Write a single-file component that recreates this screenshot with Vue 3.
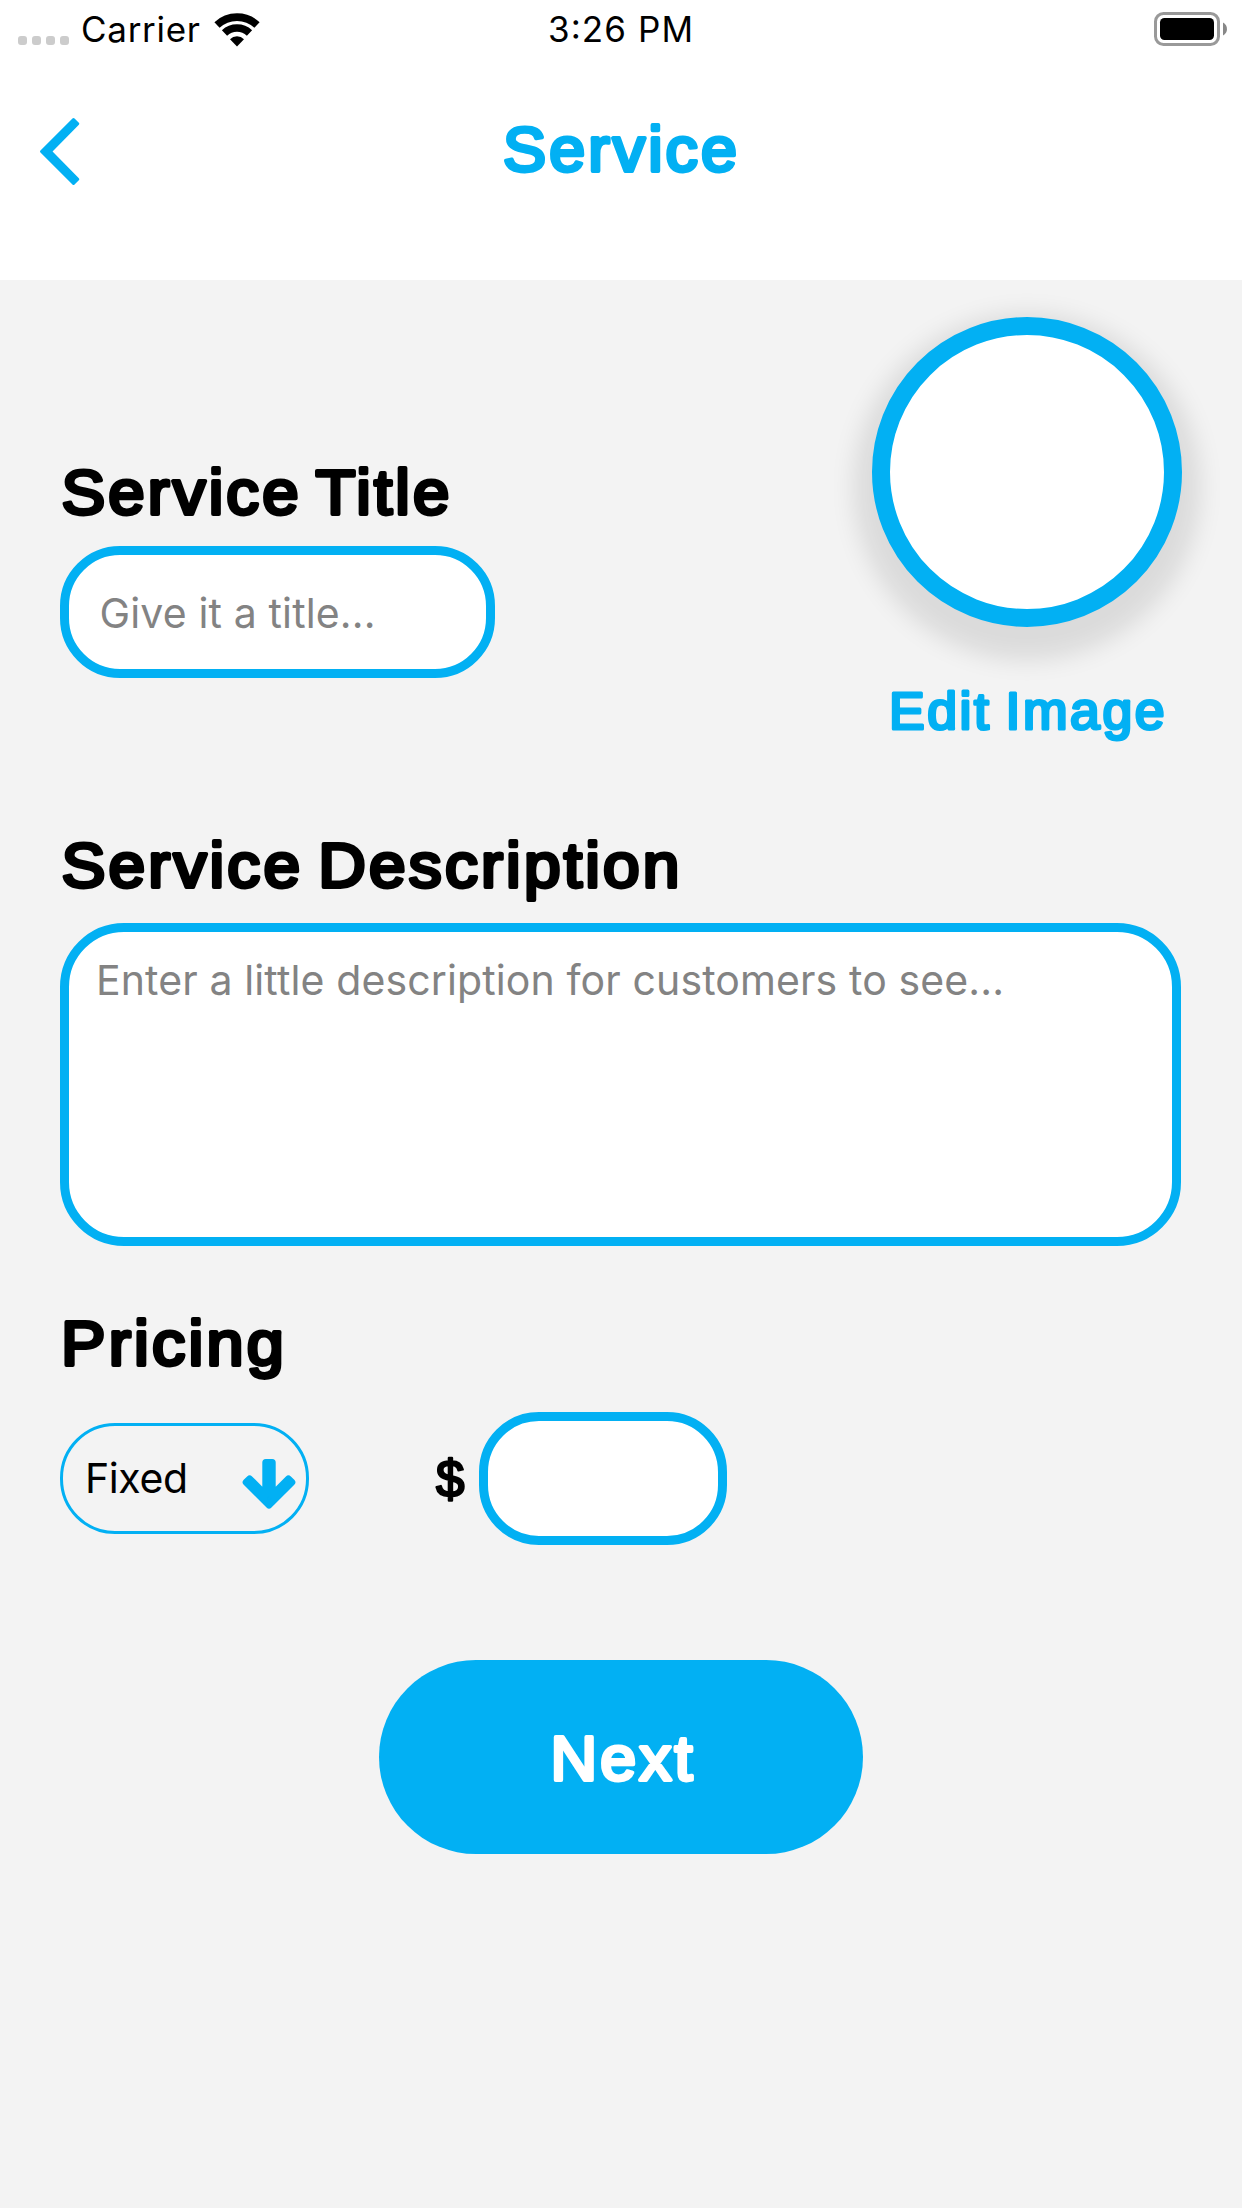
<script setup>
import { ref } from 'vue'

const priceType = ref('Fixed')
const signalDots = 4
</script>

<template>
  <main class="screen">
    <header class="top">
      <div class="status">
        <div class="status-left">
          <span class="dots"><i v-for="n in signalDots" :key="n" class="dot"></i></span>
          <svg class="carrier" width="120" height="50">
            <text class="sys status-text" x="-1" y="42" textLength="119">Carrier</text>
          </svg>
          <svg class="wifi" width="46" height="34" viewBox="0 0 46 34">
            <g fill="none" stroke="#000" stroke-width="7.6">
              <path d="M3 12A29.25 29.25 0 0 1 43 12" />
              <path d="M10.5 20A18.25 18.25 0 0 1 35.5 20" />
            </g>
            <path d="M23 33.4L16 26.2A10 10 0 0 1 30 26.2Z" />
          </svg>
        </div>
        <svg class="clock" width="146" height="50">
          <text class="sys status-text" x="-2" y="42" textLength="145">3:26 PM</text>
        </svg>
        <svg class="battery" width="74" height="34" viewBox="0 0 74 34">
          <rect x="1.5" y="1.5" width="63" height="31" rx="8" fill="none" stroke="#999" stroke-width="3" />
          <rect x="6" y="6" width="54" height="22" rx="4.5" />
          <path d="M69 10.5C74.300 13 74.300 21 69 23.500Z" fill="#888" />
        </svg>
      </div>
      <nav class="nav">
        <svg class="back" width="40" height="68" viewBox="0 0 40 68">
          <path d="M33.500 1.500L37.800 5.800L10.500 33.500L37.800 61.200L33.500 65.500L1.500 33.500Z" fill="#02b0f3" stroke="#02b0f3" stroke-width="3" stroke-linejoin="round" />
        </svg>
        <svg class="nav-title" width="235" height="70">
          <text class="round blue" x="0" y="53" textLength="237" lengthAdjust="spacingAndGlyphs">Service</text>
        </svg>
      </nav>
    </header>

    <section class="intro">
      <div class="title-col">
        <svg width="400" height="70">
          <text class="round" x="1.500" y="52" textLength="391" lengthAdjust="spacingAndGlyphs">Service Title</text>
        </svg>
        <div class="field title-field">
          <svg width="300" height="60">
            <text class="sys hint" x="0.500" y="43" textLength="276">Give it a title...</text>
          </svg>
        </div>
      </div>
      <div class="image-col">
        <div class="avatar"></div>
        <svg class="edit" width="276" height="60">
          <text class="round small blue" x="0" y="44.500" textLength="278" lengthAdjust="spacingAndGlyphs">Edit Image</text>
        </svg>
      </div>
    </section>

    <section class="description">
      <svg width="640" height="80">
        <text class="round" x="1.500" y="54" textLength="621" lengthAdjust="spacingAndGlyphs">Service Description</text>
      </svg>
      <div class="field area">
        <svg width="920" height="60">
          <text class="sys hint" x="1" y="43.500" textLength="908">Enter a little description for customers to see...</text>
        </svg>
      </div>
    </section>

    <section class="pricing">
      <svg width="240" height="80">
        <text class="round" x="1" y="53" textLength="226" lengthAdjust="spacingAndGlyphs">Pricing</text>
      </svg>
      <div class="price-row">
        <div class="select">
          <svg width="110" height="60">
            <text class="sys option" x="0" y="43" textLength="103">{{ priceType }}</text>
          </svg>
          <svg class="arrow" width="54" height="52" viewBox="0 0 54 52">
            <path d="M4.200 24.300L7.600 20.900L23.800 37.100V4.500H30.200V37.100L46.400 20.900L49.800 24.300L27 47.100Z" fill="#02b0f3" stroke="#02b0f3" stroke-width="7" stroke-linejoin="round" />
          </svg>
        </div>
        <svg class="dollar" width="32" height="70">
          <text class="round small sign" x="2" y="53">$</text>
        </svg>
        <div class="field price"></div>
      </div>
    </section>

    <button class="next" type="button">
      <svg width="142" height="70">
        <text class="round white" x="0.500" y="57.500" textLength="145" lengthAdjust="spacingAndGlyphs">Next</text>
      </svg>
    </button>
  </main>
</template>

<style>
body {
  margin: 0;
  background: #f3f3f3;
}
</style>

<style scoped>
.screen {
  display: flex;
  flex-direction: column;
  width: 1242px;
  height: 2208px;
  background: #f3f3f3;
  overflow: hidden;
}
svg {
  display: block;
  flex: none;
  overflow: visible;
}
.sys {
  font-family: Inter, "Liberation Sans", sans-serif;
}
.status-text {
  font-size: 35px;
  font-weight: 420;
}
.hint,
.option {
  font-size: 41px;
}
.hint {
  fill: #838383;
}
/* Rounded bold lettering: a regular weight thickened by a round-joined outline. */
.round {
  font-family: "Liberation Sans", Arial, sans-serif;
  font-size: 62.5px;
  letter-spacing: 3px;
  word-spacing: -6px;
  fill: #000;
  stroke: #000;
  stroke-width: 3.8px;
  stroke-linejoin: round;
}
.small {
  font-size: 51px;
  letter-spacing: 2.4px;
  word-spacing: -3px;
  stroke-width: 3px;
}
.sign {
  stroke-width: 2.4px;
}
.blue {
  fill: #02b0f3;
  stroke: #02b0f3;
}
.white {
  fill: #fff;
  stroke: #fff;
}
.top {
  height: 280px;
  background: #fff;
}
.status {
  display: grid;
  grid-template-columns: 1fr auto 1fr;
  height: 60px;
  padding: 0 14px 0 18px;
}
.status-left {
  display: flex;
}
.dots {
  display: flex;
  gap: 5px;
  margin-top: 36px;
}
.dot {
  width: 9px;
  height: 9px;
  border-radius: 3px;
  background: #ccc;
}
.carrier {
  margin-left: 13px;
}
.wifi {
  margin: 13px 0 0 12px;
}
.battery {
  margin-top: 12px;
  justify-self: end;
}
.nav {
  display: flex;
  padding: 58px 40px 0;
}
.nav-title {
  margin-left: 423px;
}
.intro {
  display: flex;
  justify-content: space-between;
  height: 553px;
  padding: 0 60px;
}
.title-col {
  padding-top: 182px;
}
.field {
  box-sizing: border-box;
  border: 9px solid #02b0f3;
  border-radius: 60px;
  background: #fff;
}
.title-field {
  width: 435px;
  height: 132px;
  margin-top: 14px;
  padding: 30px 0 0 30px;
}
.image-col {
  display: flex;
  flex-direction: column;
  align-items: center;
  padding-top: 37px;
}
.avatar {
  box-sizing: border-box;
  width: 310px;
  height: 310px;
  border: 18px solid #02b0f3;
  border-radius: 50%;
  background: #fff;
  box-shadow: 0 15px 24px 18px rgba(0, 0, 0, 0.1);
}
.edit {
  margin-top: 57px;
}
.description {
  padding: 0 60px;
}
.area {
  height: 323px;
  margin: 10px 1px 0 0;
  padding: 19px 0 0 26px;
  border-radius: 64px;
}
.pricing {
  padding: 66px 60px 0;
}
.price-row {
  display: flex;
  align-items: center;
  height: 133px;
  margin-top: 20px;
}
.select {
  box-sizing: border-box;
  display: flex;
  width: 249px;
  height: 111px;
  padding: 24px 0 0 22px;
  border: 3px solid #02b0f3;
  border-radius: 55px;
}
.arrow {
  margin: 8px 0 0 46.5px;
}
.dollar {
  margin: 0 13px 0 125px;
}
.price {
  width: 248px;
  height: 133px;
}
.next {
  display: flex;
  align-items: center;
  justify-content: center;
  align-self: center;
  width: 484px;
  height: 194px;
  margin-top: 115px;
  padding: 0;
  border: 0;
  border-radius: 97px;
  background: #02b0f3;
}
</style>
